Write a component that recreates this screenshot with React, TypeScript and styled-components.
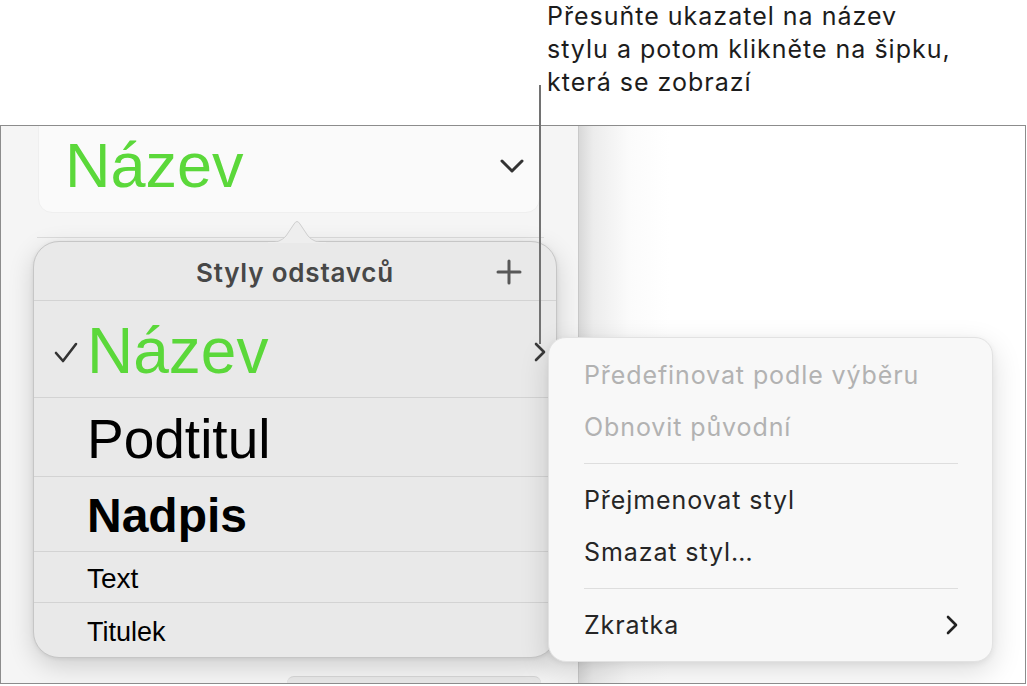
import styled, { createGlobalStyle } from 'styled-components'

const GlobalStyle = createGlobalStyle`
    html, body {
        margin: 0;
        padding: 0;
        background: #ffffff;
    }

    body {
        font-family: "Inter", "Noto Sans", sans-serif;
    }
`;

const Page = styled.div`
    position: relative;
    width: 1027px;
    height: 686px;
    overflow: hidden;
    background: #ffffff;
`;

const Callout = styled.div`
    height: 125px;
    padding-left: 547px;
    box-sizing: border-box;
    font-size: 25px;
    letter-spacing: 1px;
    line-height: 33px;
    color: #1c1c1c;
`;

const Leader = styled.div`
    position: absolute;
    left: 539px;
    top: 85px;
    width: 2px;
    height: 259px;
    background: #727272;
    z-index: 5;
`;

const Frame = styled.div`
    position: relative;
    display: flex;
    width: 1026px;
    height: 559px;
    box-sizing: border-box;
    border: 1px solid #8c8c8c;
    overflow: hidden;
`;

const Sidebar = styled.div`
    display: flex;
    flex-direction: column;
    width: 577px;
    flex-shrink: 0;
    background: #f5f5f5;
    border-right: 1px solid #c9c9c9;
    overflow: hidden;
`;

const Canvas = styled.div`
    flex: 1;
    background: linear-gradient(to right, #d8d8d8 0, #ececec 14px, #fbfbfb 50px, #ffffff 90px);
`;

const TitleCard = styled.div`
    display: flex;
    align-items: center;
    justify-content: space-between;
    margin: -20px 0 0 37px;
    width: 502px;
    height: 107px;
    padding: 12px 15px 0 26px;
    box-sizing: border-box;
    background: #fafafa;
    border: 1px solid #efefef;
    border-radius: 14px;
`;

const StyleName = styled.span<{ $size: number; $bold?: boolean; $green?: boolean }>`
    font-family: "Liberation Sans", Arial, sans-serif;
    font-size: ${p => p.$size}px;
    font-weight: ${p => (p.$bold ? 700 : 400)};
    color: ${p => (p.$green ? '#5bd83a' : '#000000')};
    line-height: 1;
`;

const Rule = styled.div`
    margin: 24px 0 0 36px;
    width: 507px;
    height: 1px;
    background: #dcdcdc;
`;

const BottomTab = styled.div`
    margin: auto 0 0 286px;
    width: 254px;
    height: 6px;
    background: #e8e8e8;
    border-top: 1px solid #d6d6d6;
    border-radius: 8px 8px 0 0;
`;

const Popover = styled.div`
    position: absolute;
    left: 32px;
    top: 115px;
    width: 524px;
    height: 417px;
    background: #e9e9e9;
    border: 1px solid #c6c6c6;
    border-radius: 26px;
    box-shadow: 0 8px 26px rgba(0, 0, 0, 0.16), 0 1px 4px rgba(0, 0, 0, 0.08);
    box-sizing: border-box;
    z-index: 2;
`;

const PopArrow = styled.svg`
    position: absolute;
    left: 234px;
    top: -24px;
`;

const Inner = styled.div`
    height: 100%;
    border-radius: 25px;
    overflow: hidden;
    display: flex;
    flex-direction: column;
`;

const Header = styled.div`
    position: relative;
    display: flex;
    align-items: center;
    justify-content: center;
    height: 58px;
    flex-shrink: 0;
    font-size: 26px;
    font-weight: 600;
    letter-spacing: 0.8px;
    color: #474747;
    padding-top: 2px;
    box-sizing: border-box;
`;

const PlusButton = styled.svg`
    position: absolute;
    right: 34px;
    top: 17px;
`;

const Row = styled.div<{ $h: number }>`
    position: relative;
    display: flex;
    align-items: center;
    height: ${p => p.$h}px;
    flex-shrink: 0;
    padding: 4px 0 0 53px;
    box-sizing: border-box;
    border-top: 1px solid #d3d3d3;
`;

const Check = styled.svg`
    position: absolute;
    left: 19px;
    top: 41px;
`;

const RowChevron = styled.svg`
    position: absolute;
    right: 10px;
    top: 41px;
`;

const Menu = styled.div`
    position: absolute;
    left: 547px;
    top: 211px;
    width: 445px;
    padding: 11px 34px 10px 35px;
    box-sizing: border-box;
    background: #f8f8f8;
    border: 1px solid #e2e2e2;
    border-radius: 18px;
    box-shadow: 0 10px 30px rgba(0, 0, 0, 0.14), 0 2px 6px rgba(0, 0, 0, 0.06);
    z-index: 3;
`;

const MenuItem = styled.div<{ $disabled?: boolean }>`
    display: flex;
    align-items: center;
    justify-content: space-between;
    height: 52px;
    font-size: 25px;
    letter-spacing: 0.9px;
    color: ${p => (p.$disabled ? '#b2b2b2' : '#262626')};
`;

const MenuSep = styled.div`
    height: 1px;
    margin: 10px 0;
    background: #dedede;
`;

const Chevron = ({ color = '#333' }: { color?: string }) => (
    <svg width="12" height="20" viewBox="0 0 12 20">
        <path d="M2 2 L10 10 L2 18" fill="none" stroke={color} strokeWidth="2.6" strokeLinecap="round" strokeLinejoin="round" />
    </svg>
);

const App = () => {
    return (
        <Page>
            <GlobalStyle />
            <Callout>
                Přesuňte ukazatel na název
                <br />
                stylu a potom klikněte na šipku,
                <br />
                která se zobrazí
            </Callout>
            <Leader />

            <Frame>
                <Sidebar>
                    <TitleCard>
                        <StyleName $size={63} $green>Název</StyleName>
                        <svg width="24" height="14" viewBox="0 0 24 14">
                            <path d="M2 2 L12 12 L22 2" fill="none" stroke="#333" strokeWidth="3" strokeLinecap="round" strokeLinejoin="round" />
                        </svg>
                    </TitleCard>
                    <Rule />
                    <BottomTab />
                </Sidebar>
                <Canvas />

                <Popover>
                    <PopArrow width="58" height="25" viewBox="0 0 58 25">
                        <path d="M0 25 Q12 25 18 18 L26 6 Q29 1 32 6 L40 18 Q46 25 58 25 Z" fill="#eeeeee" stroke="#cfcfcf" strokeWidth="1" />
                        <rect x="0" y="24" width="58" height="2" fill="#eeeeee" />
                    </PopArrow>
                    <Inner>
                        <Header>
                            Styly odstavců
                            <PlusButton width="26" height="26" viewBox="0 0 26 26">
                                <path d="M13 2 V24 M2 13 H24" stroke="#585858" strokeWidth="3" strokeLinecap="round" />
                            </PlusButton>
                        </Header>
                        <Row $h={97}>
                            <Check width="26" height="24" viewBox="0 0 26 24">
                                <path d="M3 11 L10 19 L23 2" fill="none" stroke="#333" strokeWidth="2.6" strokeLinecap="round" strokeLinejoin="round" />
                            </Check>
                            <StyleName $size={64} $green>Název</StyleName>
                            <RowChevron width="12" height="20" viewBox="0 0 12 20">
                                <path d="M2 2 L10 10 L2 18" fill="none" stroke="#3a3a3a" strokeWidth="2.6" strokeLinecap="round" strokeLinejoin="round" />
                            </RowChevron>
                        </Row>
                        <Row $h={79}>
                            <StyleName $size={55}>Podtitul</StyleName>
                        </Row>
                        <Row $h={75}>
                            <StyleName $size={48} $bold>Nadpis</StyleName>
                        </Row>
                        <Row $h={51}>
                            <StyleName $size={28}>Text</StyleName>
                        </Row>
                        <Row $h={56}>
                            <StyleName $size={27}>Titulek</StyleName>
                        </Row>
                    </Inner>
                </Popover>

                <Menu>
                    <MenuItem $disabled>Předefinovat podle výběru</MenuItem>
                    <MenuItem $disabled>Obnovit původní</MenuItem>
                    <MenuSep />
                    <MenuItem>Přejmenovat styl</MenuItem>
                    <MenuItem>Smazat styl…</MenuItem>
                    <MenuSep />
                    <MenuItem>
                        Zkratka
                        <Chevron color="#222" />
                    </MenuItem>
                </Menu>
            </Frame>
        </Page>
    );
}

export default App;
